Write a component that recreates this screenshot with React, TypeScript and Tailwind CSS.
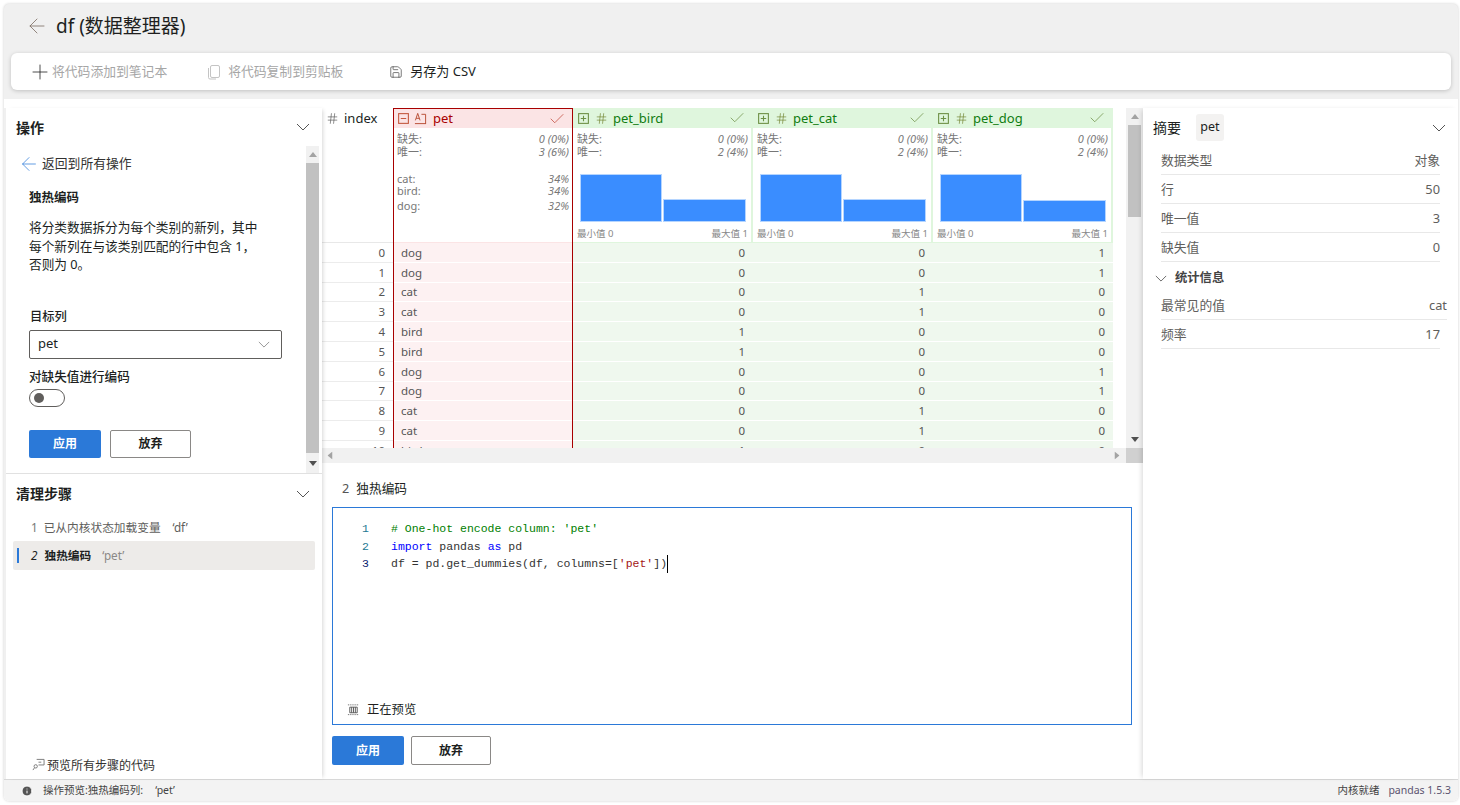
import React from 'react';
import { ArrowLeft, Check, Hash, Info, Plus, Save } from 'lucide-react';

const pets = ['dog', 'dog', 'cat', 'cat', 'bird', 'bird', 'dog', 'dog', 'cat', 'cat', 'bird'];

const columns = [
  { name: 'pet_bird', match: 'bird', lowBar: 'h-[23px]' },
  { name: 'pet_cat', match: 'cat', lowBar: 'h-[23px]' },
  { name: 'pet_dog', match: 'dog', lowBar: 'h-[22px]' },
];

const summaryRows = [
  { label: '数据类型', value: '对象' },
  { label: '行', value: '50' },
  { label: '唯一值', value: '3' },
  { label: '缺失值', value: '0' },
];

function Chevron({ className }: { className: string }) {
  return (
    <svg viewBox="0 0 14 8" className={className} fill="none" stroke="currentColor" strokeWidth="1">
      <path d="M1 1l6 6 6-6" />
    </svg>
  );
}

function BoxIcon({ plus, className }: { plus?: boolean; className: string }) {
  return (
    <svg viewBox="0 0 12 12" className={className} fill="none" stroke="currentColor" strokeWidth="1">
      <rect x="1.5" y="1.5" width="9" height="9" />
      <path d="M3.5 6h5" />
      {plus ? <path d="M6 3.5v5" /> : null}
    </svg>
  );
}

function TextTypeIcon() {
  return (
    <svg viewBox="0 0 14 14" className="h-[13px] w-[13px] text-[#b5482f]" fill="none" stroke="currentColor" strokeWidth="1">
      <path d="M1 12.5h12M8 2.5h4.5v10" />
      <path d="M1.5 9l2.5-7.5L6.5 9M2.4 6.8h3.2" />
    </svg>
  );
}

function ScrollArrow({ up, dark }: { up?: boolean; dark?: boolean }) {
  return (
    <svg viewBox="0 0 8 5" className={`h-[5px] w-[8px] ${dark ? 'fill-[#505050]' : 'fill-[#a3a3a3]'}`}>
      <path d={up ? 'M4 0l4 5H0z' : 'M4 5L0 0h8z'} />
    </svg>
  );
}

function PrimaryButton({ wide }: { wide?: boolean }) {
  return (
    <button className={`rounded-[2px] bg-[#2b79d8] text-[12px] font-semibold text-white ${wide ? 'h-[29px] w-[72px]' : 'h-[28px] w-[72px]'}`}>
      应用
    </button>
  );
}

function GhostButton({ wide }: { wide?: boolean }) {
  return (
    <button className={`rounded-[2px] border border-[#8a8886] bg-white text-[12px] font-semibold text-[#201f1e] ${wide ? 'h-[29px] w-[80px]' : 'h-[28px] w-[81px]'}`}>
      放弃
    </button>
  );
}

function StatLine({ label, value, tight, className }: { label: string; value: string; tight?: boolean; className?: string }) {
  return (
    <div className={`flex items-center justify-between text-[11px] text-[#777] ${tight ? 'h-[12px] leading-[12px]' : 'h-[13px] leading-[13px]'} ${className ?? ''}`}>
      <span>{label}</span>
      <span className="italic">{value}</span>
    </div>
  );
}

function PetColumn() {
  return (
    <div className="w-[180px] shrink-0 border-x border-[#a80000]">
      <div className="flex h-[20px] items-center border-t border-[#a80000] bg-[#fbe4e5] pl-[3px] pr-[6px]">
        <BoxIcon className="h-[13px] w-[13px] text-[#c4593f]" />
        <span className="ml-[4px]"><TextTypeIcon /></span>
        <span className="ml-[6px] mt-[1px] text-[13px] text-[#a80000]">pet</span>
        <Check className="ml-auto h-[18px] w-[18px] text-[#c0483a]" strokeWidth={1} />
      </div>
      <div className="h-[114px] px-[3px] pt-[4px]">
        <StatLine label="缺失:" value="0 (0%)" />
        <StatLine label="唯一:" value="3 (6%)" />
        <StatLine tight label="cat:" value="34%" className="mt-[15px]" />
        <StatLine tight label="bird:" value="34%" />
        <StatLine label="dog:" value="32%" className="mt-[2px]" />
      </div>
      <div className="h-[1px] bg-[#fbe4e5]" />
      {pets.map((pet, i) => (
        <div key={i} className="flex h-[19.8px] items-center border-b border-white bg-[#fdf1f2] pl-[7px] text-[11.5px] text-[#555]">
          {pet}
        </div>
      ))}
    </div>
  );
}

function OneHotColumn({ name, match, lowBar }: { name: string; match: string; lowBar: string }) {
  return (
    <div className="w-[180px] shrink-0">
      <div className="flex h-[20px] items-center bg-[#dff6dd] pl-[4px] pr-[7px]">
        <BoxIcon plus className="h-[13px] w-[13px] text-[#6d8f45]" />
        <Hash className="ml-[5px] h-[13px] w-[13px] text-[#6d7f2a]" strokeWidth={1.2} />
        <span className="ml-[5px] mt-[2px] text-[13px] text-[#107c10]">{name}</span>
        <Check className="ml-auto h-[18px] w-[18px] text-[#6d8f45]" strokeWidth={1} />
      </div>
      <div className="h-[114px] border-r-2 border-[#dff6dd] pl-[4px] pr-[3px] pt-[4px]">
        <StatLine label="缺失:" value="0 (0%)" />
        <StatLine label="唯一:" value="2 (4%)" />
        <div className="mt-[16px] flex h-[48px] items-end gap-[1px] pl-[3px] pr-[2px]">
          <div className="h-[48px] w-[82px] border border-[#b5d5ff] bg-[#3a8dff]" />
          <div className={`${lowBar} w-[83px] border border-[#b5d5ff] bg-[#3a8dff]`} />
        </div>
        <div className="mt-[6px] flex justify-between text-[9.5px] leading-[12px] text-[#888]">
          <span>最小值 0</span>
          <span>最大值 1</span>
        </div>
      </div>
      <div className="h-[1px] bg-[#dff6dd]" />
      {pets.map((pet, i) => (
        <div key={i} className="flex h-[19.8px] items-center justify-end border-b border-white bg-[#eff8ee] pr-[8px] text-[11.5px] text-[#555]">
          {pet === match ? 1 : 0}
        </div>
      ))}
    </div>
  );
}

function DataGrid() {
  return (
    <div className="flex h-[355px] flex-col">
      <div className="flex h-[340px]">
        <div className="flex w-[804px] overflow-hidden">
          <div className="w-[71px] shrink-0">
            <div className="flex h-[20px] items-center pl-[4px] text-[13px] text-[#201f1e]">
              <Hash className="h-[13px] w-[13px] text-[#555]" strokeWidth={1.2} />
              <span className="ml-[5px] mt-[2px]">index</span>
            </div>
            <div className="h-[114px]" />
            <div className="h-[1px] bg-[#e8e8e8]" />
            {pets.map((_, i) => (
              <div key={i} className="flex h-[19.8px] items-center justify-end border-b border-[#ececec] pr-[8px] text-[11.5px] text-[#555]">
                {i}
              </div>
            ))}
          </div>
          <PetColumn />
          {columns.map((c) => (
            <OneHotColumn key={c.name} name={c.name} match={c.match} lowBar={c.lowBar} />
          ))}
        </div>
        <div className="flex w-[17px] flex-col items-center bg-[#f1f1f1]">
          <div className="flex h-[17px] items-center"><ScrollArrow up /></div>
          <div className="h-[92px] w-[13px] bg-[#c1c1c1]" />
          <div className="flex-1" />
          <div className="flex h-[17px] items-center"><ScrollArrow dark /></div>
        </div>
      </div>
      <div className="flex h-[15px]">
        <div className="flex flex-1 items-center justify-between bg-[#f1f1f1] pl-[4px] pr-[5px]">
          <span className="rotate-[-90deg]"><ScrollArrow up /></span>
          <span className="rotate-[-90deg]"><ScrollArrow /></span>
        </div>
        <div className="w-[17px] bg-[#d0d0d0]" />
      </div>
    </div>
  );
}

function LeftPanel() {
  return (
    <div className="relative z-10 flex w-[316px] shrink-0 flex-col bg-white shadow-[3px_0_4px_-2px_rgba(0,0,0,0.16)]">
      <div className="flex h-[366px] flex-col border-b border-[#e1e1e1]">
        <div className="flex h-[38px] items-center justify-between pl-[10px] pr-[12px]">
          <span className="text-[14px] font-semibold text-[#201f1e]">操作</span>
          <Chevron className="h-[8px] w-[14px] text-[#555]" />
        </div>
        <div className="flex flex-1">
          <div className="flex-1">
            <div className="flex h-[35px] items-center pl-[12px]">
              <ArrowLeft className="h-[22px] w-[22px] text-[#2b79d8]" strokeWidth={0.8} />
              <span className="ml-[2px] text-[12.8px] text-[#323130]">返回到所有操作</span>
            </div>
            <div className="mt-[8px] pl-[23px] text-[12.5px] font-semibold leading-[18px] text-[#201f1e]">独热编码</div>
            <p className="mt-[11px] pl-[23px] text-[12.7px] leading-[18.5px] text-[#201f1e]">
              将分类数据拆分为每个类别的新列，其中
              <br />
              每个新列在与该类别匹配的行中包含 1，
              <br />
              否则为 0。
            </p>
            <div className="mt-[34px] pl-[24px] text-[12.3px] font-medium leading-[18px] text-[#201f1e]">目标列</div>
            <div className="ml-[23px] mt-[4px] flex h-[29px] w-[253px] items-center justify-between rounded-[2px] border border-[#605e5c] pl-[8px] pr-[11px] text-[13px] text-[#201f1e]">
              <span>pet</span>
              <Chevron className="h-[7px] w-[12px] text-[#888]" />
            </div>
            <div className="mt-[9px] pl-[23px] text-[12.6px] font-medium leading-[18px] text-[#201f1e]">对缺失值进行编码</div>
            <div className="ml-[23px] mt-[3px] flex h-[18px] w-[36px] items-center rounded-full border border-[#605e5c] pl-[4px]">
              <div className="h-[10px] w-[10px] rounded-full bg-[#605e5c]" />
            </div>
            <div className="ml-[23px] mt-[23px] flex gap-[9px]">
              <PrimaryButton />
              <GhostButton />
            </div>
          </div>
          <div className="mr-[3px] flex w-[13px] flex-col items-center bg-[#f1f1f1]">
            <div className="flex h-[17px] items-center"><ScrollArrow up /></div>
            <div className="h-[290px] w-[13px] bg-[#c1c1c1]" />
            <div className="flex flex-1 items-center"><ScrollArrow dark /></div>
          </div>
        </div>
      </div>
      <div className="flex flex-1 flex-col">
        <div className="flex h-[39px] items-center justify-between pl-[10px] pr-[12px]">
          <span className="text-[14px] font-semibold text-[#201f1e]">清理步骤</span>
          <Chevron className="h-[8px] w-[14px] text-[#555]" />
        </div>
        <div className="mt-[2px] flex h-[25px] items-center pl-[25px] text-[11.7px] text-[#605e5c]">
          <span className="text-[#777]">1</span>
          <span className="ml-[6px]">已从内核状态加载变量</span>
          <span className="ml-[12px]">‘df’</span>
        </div>
        <div className="mx-[7px] mt-[1px] flex h-[29px] items-center rounded-[2px] bg-[#edebe9] pl-[4px] text-[11.7px]">
          <div className="h-[15px] w-[2px] bg-[#2b79d8]" />
          <span className="ml-[12px] italic text-[#201f1e]">2</span>
          <span className="ml-[7px] font-semibold text-[#201f1e]">独热编码</span>
          <span className="ml-[11px] text-[#8a8886]">‘pet’</span>
        </div>
        <div className="flex-1" />
        <div className="flex h-[22px] items-start pl-[26px] text-[12px] text-[#323130]">
          <svg viewBox="0 0 14 14" className="mt-[1px] h-[13px] w-[13px] text-[#777]" fill="none" stroke="currentColor" strokeWidth="1">
            <path d="M5 1.5h8v6H7" />
            <path d="M7 4.5h3" />
            <circle cx="4" cy="9" r="1.8" />
            <path d="M2.8 10.4L1 13" />
          </svg>
          <span className="ml-[2px]">预览所有步骤的代码</span>
        </div>
      </div>
    </div>
  );
}

function CodeEditor() {
  return (
    <div className="ml-[10px] mr-[11px] mt-[7px] flex h-[218px] flex-col border border-[#2b79d8] pb-[5px]">
      <div className="flex-1 pt-[12px] font-['Liberation_Mono',monospace] text-[11.5px] leading-[17.5px]">
        <div className="flex">
          <span className="w-[58px] pl-[29px] text-[#237893]">1</span>
          <span className="text-[#008000]">{"# One-hot encode column: 'pet'"}</span>
        </div>
        <div className="flex">
          <span className="w-[58px] pl-[29px] text-[#237893]">2</span>
          <span className="text-[#333]">
            <span className="text-[#0000ff]">import</span> pandas <span className="text-[#0000ff]">as</span> pd
          </span>
        </div>
        <div className="flex">
          <span className="w-[58px] pl-[29px] text-[#0b216f]">3</span>
          <span className="border-r border-black text-[#333]">
            df = pd.get_dummies(df, columns=[<span className="text-[#a31515]">{"'pet'"}</span>])
          </span>
        </div>
      </div>
      <div className="flex items-center pl-[14px] text-[12.3px] text-[#201f1e]">
        <svg viewBox="0 0 14 14" className="h-[13px] w-[13px] text-[#555]" fill="none" stroke="currentColor" strokeWidth="1">
          <path d="M1 2h2M11 2h2M1 12.5h12M3 2h8" strokeDasharray="1 1" />
          <path d="M3 4.5h8v6H3zM5 4.5v6M7 4.5v6M9 4.5v6" />
        </svg>
        <span className="ml-[7px]">正在预览</span>
      </div>
    </div>
  );
}

function SummaryPanel() {
  return (
    <div className="relative z-10 w-[315px] shrink-0 bg-white shadow-[-3px_0_5px_-2px_rgba(0,0,0,0.16)]">
      <div className="flex h-[33px] items-center pl-[10px] pr-[12px] pt-[6px]">
        <span className="text-[14px] text-[#201f1e]">摘要</span>
        <span className="ml-[15px] flex h-[27px] w-[28px] items-center justify-center rounded-[3px] bg-[#f3f2f1] text-[12.5px] text-[#201f1e]">pet</span>
        <Chevron className="ml-auto h-[8px] w-[14px] text-[#555]" />
      </div>
      <div className="pl-[18px] pr-[18px] pt-[5px]">
        {summaryRows.map((row) => (
          <div key={row.label} className="flex h-[29px] items-center justify-between border-b border-[#e8e8e8] pt-[2px] text-[12.8px] text-[#605e5c]">
            <span>{row.label}</span>
            <span>{row.value}</span>
          </div>
        ))}
      </div>
      <div className="flex h-[31px] items-center pl-[12px] pt-[2px] text-[12.3px] font-semibold text-[#444]">
        <Chevron className="h-[7px] w-[12px] text-[#555]" />
        <span className="ml-[8px]">统计信息</span>
      </div>
      <div className="pl-[18px] pr-[11px]">
        <div className="flex h-[27px] items-center justify-between border-b border-[#e8e8e8] text-[12.8px] text-[#605e5c]">
          <span>最常见的值</span>
          <span>cat</span>
        </div>
      </div>
      <div className="pl-[18px] pr-[18px]">
        <div className="flex h-[29px] items-center justify-between border-b border-[#e8e8e8] pt-[2px] text-[12.8px] text-[#605e5c]">
          <span>频率</span>
          <span>17</span>
        </div>
      </div>
    </div>
  );
}

export default function App() {
  return (
    <div className="flex h-[805px] w-[1460px] flex-col overflow-hidden bg-white pb-[4px] pl-[4px] pr-[2px] pt-[4px] font-['Noto_Sans','Noto_Sans_CJK_SC',sans-serif]">
      <div className="flex flex-1 flex-col overflow-hidden rounded-[5px] bg-[#f0f0f0] shadow-[0_0_3px_rgba(0,0,0,0.2)]">
        <div className="flex h-[44px] items-center pl-[21px]">
          <ArrowLeft className="h-[24px] w-[24px] text-[#7a6a60]" strokeWidth={0.8} />
          <h1 className="ml-[7px] text-[19px] text-[#201f1e]">df (数据整理器)</h1>
        </div>
        <div className="mx-[7px] mt-[5px] flex h-[37px] items-center rounded-[6px] bg-white pl-[17px] text-[12.8px] shadow-[0_1px_4px_rgba(0,0,0,0.2)]">
          <Plus className="h-[24px] w-[24px] text-[#201f1e]" strokeWidth={0.8} />
          <span className="text-[#a6a6a6]">将代码添加到笔记本</span>
          <svg viewBox="0 0 14 16" className="ml-[40px] h-[16px] w-[14px] text-[#c4c4c4]" fill="none" stroke="currentColor" strokeWidth="1">
            <rect x="3.5" y="1.5" width="9" height="12" rx="1.5" />
            <path d="M1.5 4v9.5a1.5 1.5 0 0 0 1.5 1.5h6" />
          </svg>
          <span className="ml-[7px] text-[#a6a6a6]">将代码复制到剪贴板</span>
          <Save className="ml-[46px] h-[14px] w-[14px] text-[#444]" strokeWidth={1.2} />
          <span className="ml-[7px] text-[13px] text-[#201f1e]">另存为 CSV</span>
        </div>
        <div className="mt-[9px] flex flex-1 flex-col bg-white pt-[9px]">
          <div className="flex flex-1 bg-[#f0f0f0] pl-[2px]">
            <LeftPanel />
            <div className="flex w-[821px] shrink-0 flex-col bg-white">
              <DataGrid />
              <div className="flex h-[37px] items-end pl-[20px] text-[12.7px] text-[#201f1e]">
                <span className="pb-[2px] text-[#555]">2</span>
                <span className="ml-[7px] pb-[2px]">独热编码</span>
              </div>
              <CodeEditor />
              <div className="ml-[10px] mt-[11px] flex gap-[7px]">
                <PrimaryButton wide />
                <GhostButton wide />
              </div>
            </div>
            <SummaryPanel />
          </div>
          <div className="flex h-[22px] items-center border-t border-[#d8d8d8] bg-[#f3f3f3] pl-[17px] pr-[7px] text-[10.5px] text-[#444]">
            <Info className="h-[12px] w-[12px] fill-[#555] text-white" strokeWidth={2} />
            <span className="ml-[10px]">操作预览:独热编码列:</span>
            <span className="ml-[12px]">‘pet’</span>
            <span className="ml-auto">内核就绪</span>
            <span className="ml-[9px] text-[#5c5470]">pandas 1.5.3</span>
          </div>
        </div>
      </div>
    </div>
  );
}
